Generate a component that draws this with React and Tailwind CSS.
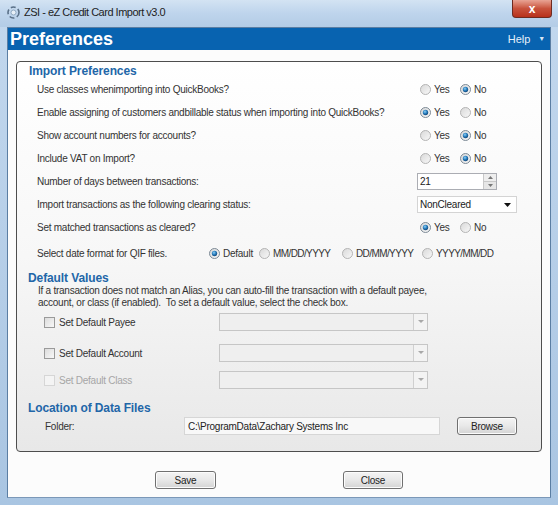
import React from "react";

const Radio = ({ checked }) => (
  <svg width="11" height="11" viewBox="0 0 11 11" className="shrink-0">
    <defs>
      <linearGradient id={checked ? "rg1" : "rg0"} x1="0" y1="0" x2="1" y2="1">
        <stop offset="0" stopColor="#d8d8d8" />
        <stop offset="1" stopColor="#f9f9f9" />
      </linearGradient>
      <radialGradient id="dot" cx="0.4" cy="0.35" r="0.7">
        <stop offset="0" stopColor="#8fd0f5" />
        <stop offset="0.5" stopColor="#2a7fbf" />
        <stop offset="1" stopColor="#0f3f70" />
      </radialGradient>
    </defs>
    <circle cx="5.5" cy="5.5" r="5" fill={`url(#${checked ? "rg1" : "rg0"})`} stroke={checked ? "#7d8a96" : "#b4b4b4"} strokeWidth="1" />
    {checked && <circle cx="5.5" cy="5.5" r="2.7" fill="url(#dot)" />}
  </svg>
);

const RadioItem = ({ checked, label, w, t = "" }) => (
  <div className={`flex items-center gap-[3px] shrink-0 ${w}`}>
    <Radio checked={checked} />
    <span className={t}>{label}</span>
  </div>
);

const YesNo = ({ yes }) => (
  <div className="flex items-center">
    <RadioItem checked={yes} label="Yes" w="w-[40px]" />
    <RadioItem checked={!yes} label="No" w="w-[40px]" />
  </div>
);

const Row = ({ label, children, lw = "w-[383px]", extra = "" }) => (
  <div className={`flex items-center h-[23px] pl-[20px] ${extra}`}>
    <div className={`${lw} shrink-0`}>{label}</div>
    {children}
  </div>
);

const Check = ({ disabled }) => (
  <div
    className={`w-[11px] h-[11px] shrink-0 border ${
      disabled ? "border-[#d6d6d6] bg-[#f4f4f4]" : "border-[#9a9a9a] bg-gradient-to-br from-[#dcdcdc] to-[#f8f8f8]"
    }`}
  />
);

const Combo = () => (
  <div className="w-[209px] h-[18px] border border-[#c6c6c6] bg-[#efefef] flex justify-end">
    <div className="w-[14px] h-full border-l border-[#d0d0d0] bg-[#f3f3f3] flex items-center justify-center">
      <svg width="6" height="4" viewBox="0 0 6 4">
        <path d="M0 0 L6 0 L3 3 Z" fill="#a8a8a8" />
      </svg>
    </div>
  </div>
);

const Btn = ({ label, w = "w-[61px]" }) => (
  <div
    className={`${w} h-[18px] rounded-[3px] border border-[#707070] bg-gradient-to-b from-[#f4f4f4] via-[#e8e8e8] to-[#d4d4d4] flex items-center justify-center text-[#222] shadow-[inset_0_0_0_1px_#fcfcfc]`}
  >
    {label}
  </div>
);

export default function App() {
  return (
    <div
      className="w-[558px] h-[505px] overflow-hidden flex flex-col bg-gradient-to-b from-[#c3d8ee] to-[#a9c5e2] text-[10px] tracking-[-0.25px] text-[#333]"
      style={{ fontFamily: '"Liberation Sans", Arial, sans-serif' }}
    >
      {/* Title bar */}
      <div className="h-[27px] shrink-0 flex items-start bg-gradient-to-b from-[#d3e3f3] via-[#bed4ec] to-[#b3cce6]">
        <div className="flex items-center h-[24px] pl-[7px] gap-[4px]">
          <svg width="13" height="13" viewBox="0 0 13 13">
            <circle cx="6.5" cy="6.5" r="5.5" fill="none" stroke="#5a7088" strokeWidth="1.6" strokeDasharray="5 2.5" />
            <circle cx="6.5" cy="6.5" r="2.5" fill="#e8f0f8" stroke="#7f9ab5" strokeWidth="0.8" />
          </svg>
          <span className="text-[11px] tracking-[-0.5px] text-[#1e1e1e]">ZSI - eZ Credit Card Import v3.0</span>
        </div>
        <div className="ml-auto mr-[6px] w-[40px] h-[18px] rounded-b-[4px] border border-t-0 border-[#6e2a20] bg-gradient-to-b from-[#e8a394] via-[#c8523c] to-[#b8301a] flex items-center justify-center">
          <span className="text-white font-bold text-[12px] leading-none">x</span>
        </div>
      </div>

      {/* Body */}
      <div className="flex-1 flex px-[7px]">
        <div className="flex-1 flex flex-col border border-[#5b7ea3] border-b-[#7b98b8]">
          {/* Header */}
          <div className="h-[22px] shrink-0 bg-[#0863b0] flex items-center text-white">
            <span className="pl-[2px] text-[18px] font-bold tracking-[0px] leading-none">Preferences</span>
            <span className="ml-auto text-[11px] tracking-[0px] text-[#e6f0fa]">Help</span>
            <span className="ml-[8px] mr-[5px] text-[7px] text-[#d8e6f4]">▼</span>
          </div>
          {/* Main */}
          <div className="flex-1 bg-[#fcfcfc] flex flex-col">
            <div className="mt-[11px] ml-[8px] mr-[8px] h-[391px] border border-[#4e4e4e] rounded-[4px] bg-gradient-to-b from-[#ffffff] via-[#f7f7f7] to-[#e8e8e8] flex flex-col">
              <div className="h-[17px] flex items-center pl-[12px] text-[12px] font-bold tracking-[-0.1px] text-[#2266a8]">Import Preferences</div>
              <Row label="Use classes whenimporting into QuickBooks?" extra="-mt-[1px]"><YesNo yes={false} /></Row>
              <Row label="Enable assigning of customers andbillable status when importing into QuickBooks?"><YesNo yes={true} /></Row>
              <Row label="Show account numbers for accounts?"><YesNo yes={false} /></Row>
              <Row label="Include VAT on Import?"><YesNo yes={false} /></Row>
              <Row label="Number of days between transactions:" lw="w-[380px]">
                <div className="w-[80px] h-[17px] border border-[#abadb3] bg-white flex items-center">
                  <span className="pl-[2px] flex-1 text-[#222]">21</span>
                  <div className="w-[13px] h-full border-l border-[#c8c8c8] flex flex-col">
                    <div className="flex-1 bg-[#eeeeee] border-b border-[#c8c8c8] flex items-center justify-center">
                      <svg width="5" height="3" viewBox="0 0 5 3"><path d="M0 3 L5 3 L2.5 0 Z" fill="#777" /></svg>
                    </div>
                    <div className="flex-1 bg-[#e6e6e6] flex items-center justify-center">
                      <svg width="5" height="3" viewBox="0 0 5 3"><path d="M0 0 L5 0 L2.5 3 Z" fill="#777" /></svg>
                    </div>
                  </div>
                </div>
              </Row>
              <Row label="Import transactions as the following clearing status:" lw="w-[380px]">
                <div className="w-[100px] h-[17px] border border-[#d4d4d4] bg-white flex items-center">
                  <span className="pl-[2px] flex-1 text-[#222]">NonCleared</span>
                  <svg width="7" height="4" viewBox="0 0 7 4" className="mr-[5px]"><path d="M0 0 L7 0 L3.5 4 Z" fill="#111" /></svg>
                </div>
              </Row>
              <Row label="Set matched transactions as cleared?"><YesNo yes={true} /></Row>
              <Row label="Select date format for QIF files." lw="w-[172px]" extra="mt-[3px]">
                <div className="flex items-center">
                  <RadioItem checked={true} label="Default" w="w-[50px]" />
                  <RadioItem checked={false} label="MM/DD/YYYY" w="w-[83px]" t="tracking-[-0.6px]" />
                  <RadioItem checked={false} label="DD/MM/YYYY" w="w-[80px]" t="tracking-[-0.6px]" />
                  <RadioItem checked={false} label="YYYY/MM/DD" w="w-[80px]" t="tracking-[-0.6px]" />
                </div>
              </Row>

              <div className="mt-[6px] h-[14px] flex items-center pl-[11px] text-[12px] font-bold tracking-[-0.1px] text-[#2266a8]">Default Values</div>
              <div className="pl-[21px] leading-[12px] text-[#333]">
                <div>If a transaction does not match an Alias, you can auto-fill the transaction with a default payee,</div>
                <div>account, or class (if enabled).&nbsp; To set a default value, select the check box.</div>
              </div>
              <div className="mt-[4px] h-[18px] flex items-center pl-[27px]">
                <div className="w-[175px] flex items-center gap-[4px]"><Check /><span>Set Default Payee</span></div>
                <Combo />
              </div>
              <div className="mt-[13px] h-[18px] flex items-center pl-[27px]">
                <div className="w-[175px] flex items-center gap-[4px]"><Check /><span>Set Default Account</span></div>
                <Combo />
              </div>
              <div className="mt-[9px] h-[18px] flex items-center pl-[27px]">
                <div className="w-[175px] flex items-center gap-[4px]"><Check disabled /><span className="text-[#a6a6a6]">Set Default Class</span></div>
                <Combo />
              </div>

              <div className="mt-[12px] h-[14px] flex items-center pl-[11px] text-[12px] font-bold tracking-[-0.1px] text-[#2266a8]">Location of Data Files</div>
              <div className="mt-[2px] h-[18px] flex items-center pl-[28px]">
                <div className="w-[139px] shrink-0">Folder:</div>
                <div className="w-[256px] h-[18px] border border-[#d6d6d6] bg-[#f8f8f8] flex items-center pl-[3px] text-[#222]">C:\ProgramData\Zachary Systems Inc</div>
                <div className="ml-[17px]"><Btn label="Browse" w="w-[60px]" /></div>
              </div>
            </div>
            <div className="flex justify-center gap-[127px] mt-[19px]">
              <Btn label="Save" />
              <Btn label="Close" w="w-[60px]" />
            </div>
          </div>
        </div>
      </div>
      <div className="h-[7px] shrink-0" />
    </div>
  );
}
